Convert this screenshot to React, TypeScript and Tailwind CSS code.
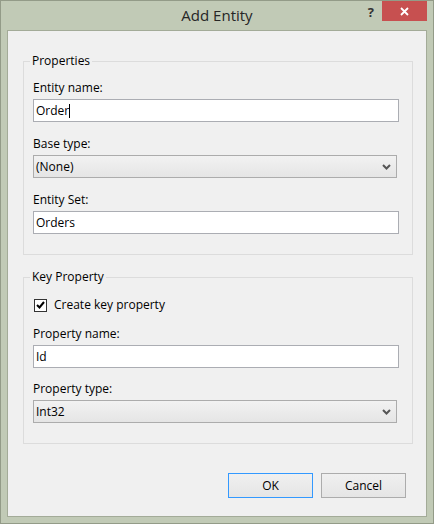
import React from 'react';

const font = "font-['Segoe_UI','Open_Sans',sans-serif]";

const Chevron = () => (
   <svg width="9" height="6" viewBox="0 0 9 6" className="mr-[5px]">
      <polyline points="1,1 4.5,4.5 8,1" fill="none" stroke="#555" strokeWidth="2" />
   </svg>
);

const TextBox = ({ value, caret }: { value: string; caret?: boolean }) => (
   <div className="h-[23px] w-[366px] bg-white border border-[#abadb3] flex items-center pl-[2px] text-black">
      <span>{value}</span>
      {caret && <span className="inline-block w-px h-[14px] bg-black" />}
   </div>
);

const Select = ({ value }: { value: string }) => (
   <div className="h-[23px] w-[364px] border border-[#acacac] bg-gradient-to-b from-[#f2f2f2] to-[#e5e5e5] flex items-center justify-between pl-[2px] text-black">
      <span>{value}</span>
      <Chevron />
   </div>
);

const Field = ({ label, children }: { label: string; children: React.ReactNode }) => (
   <div className="flex flex-col">
      <span className="h-[16px] leading-[16px] mb-[3px]">{label}</span>
      {children}
   </div>
);

const Group = ({ title, gap, children }: { title: string; gap: string; children: React.ReactNode }) => (
   <fieldset className={`ml-[15px] w-[390px] border border-[#dcdcdc] pl-[9px] pb-[20px] flex flex-col ${gap}`}>
      <legend className="-ml-[3px] px-[2px] leading-[16px] mb-[11px]">{title}</legend>
      {children}
   </fieldset>
);

const Button = ({ label, focused }: { label: string; focused?: boolean }) => (
   <button
      className={`w-[85px] h-[25px] border bg-gradient-to-b from-[#f0f0f0] to-[#e5e5e5] text-black ${
         focused ? 'border-[#3399ff]' : 'border-[#acacac]'
      }`}>
      {label}
   </button>
);

export default function App() {
   return (
      <div className={`w-[434px] h-[524px] bg-[#c1cab6] border border-[#939b88] px-[6px] pb-[6px] flex flex-col text-[12px] text-black ${font}`}>
         <div className="h-[29px] flex">
            <div className="w-[66px]" />
            <div className="flex-1 text-center text-[15px] leading-[28px] text-[#262626]">Add Entity</div>
            <div className="w-[66px] flex items-start justify-end">
               <span className="mt-[2px] mr-[8px] text-[13px] font-bold text-[#333]">?</span>
               <div className="w-[45px] h-[20px] bg-[#c75050] flex items-center justify-center">
                  <svg width="9" height="9" viewBox="0 0 9 9">
                     <path d="M1 1 L8 8 M8 1 L1 8" stroke="white" strokeWidth="1.8" />
                  </svg>
               </div>
            </div>
         </div>

         <div className="flex-1 bg-[#f0f0f0] border border-[#a3ab98] pt-[22px] flex flex-col">
            <Group title="Properties" gap="gap-[14px]">
               <Field label="Entity name:">
                  <TextBox value="Order" caret />
               </Field>
               <Field label="Base type:">
                  <Select value="(None)" />
               </Field>
               <Field label="Entity Set:">
                  <TextBox value="Orders" />
               </Field>
            </Group>

            <div className="mt-[14px]">
               <Group title="Key Property" gap="gap-[13px]">
                  <label className="flex items-center h-[16px] ml-[1px] mt-[1px]">
                     <span className="w-[13px] h-[13px] bg-white border border-[#333] flex items-center justify-center mr-[7px]">
                        <svg width="9" height="8" viewBox="0 0 9 8">
                           <polyline points="1,4 3.5,6.5 8,1" fill="none" stroke="#000" strokeWidth="2" />
                        </svg>
                     </span>
                     Create key property
                  </label>
                  <Field label="Property name:">
                     <TextBox value="Id" />
                  </Field>
                  <Field label="Property type:">
                     <Select value="Int32" />
                  </Field>
               </Group>
            </div>

            <div className="mt-[29px] flex justify-end gap-[8px] mr-[20px]">
               <Button label="OK" focused />
               <Button label="Cancel" />
            </div>
         </div>
      </div>
   );
}
